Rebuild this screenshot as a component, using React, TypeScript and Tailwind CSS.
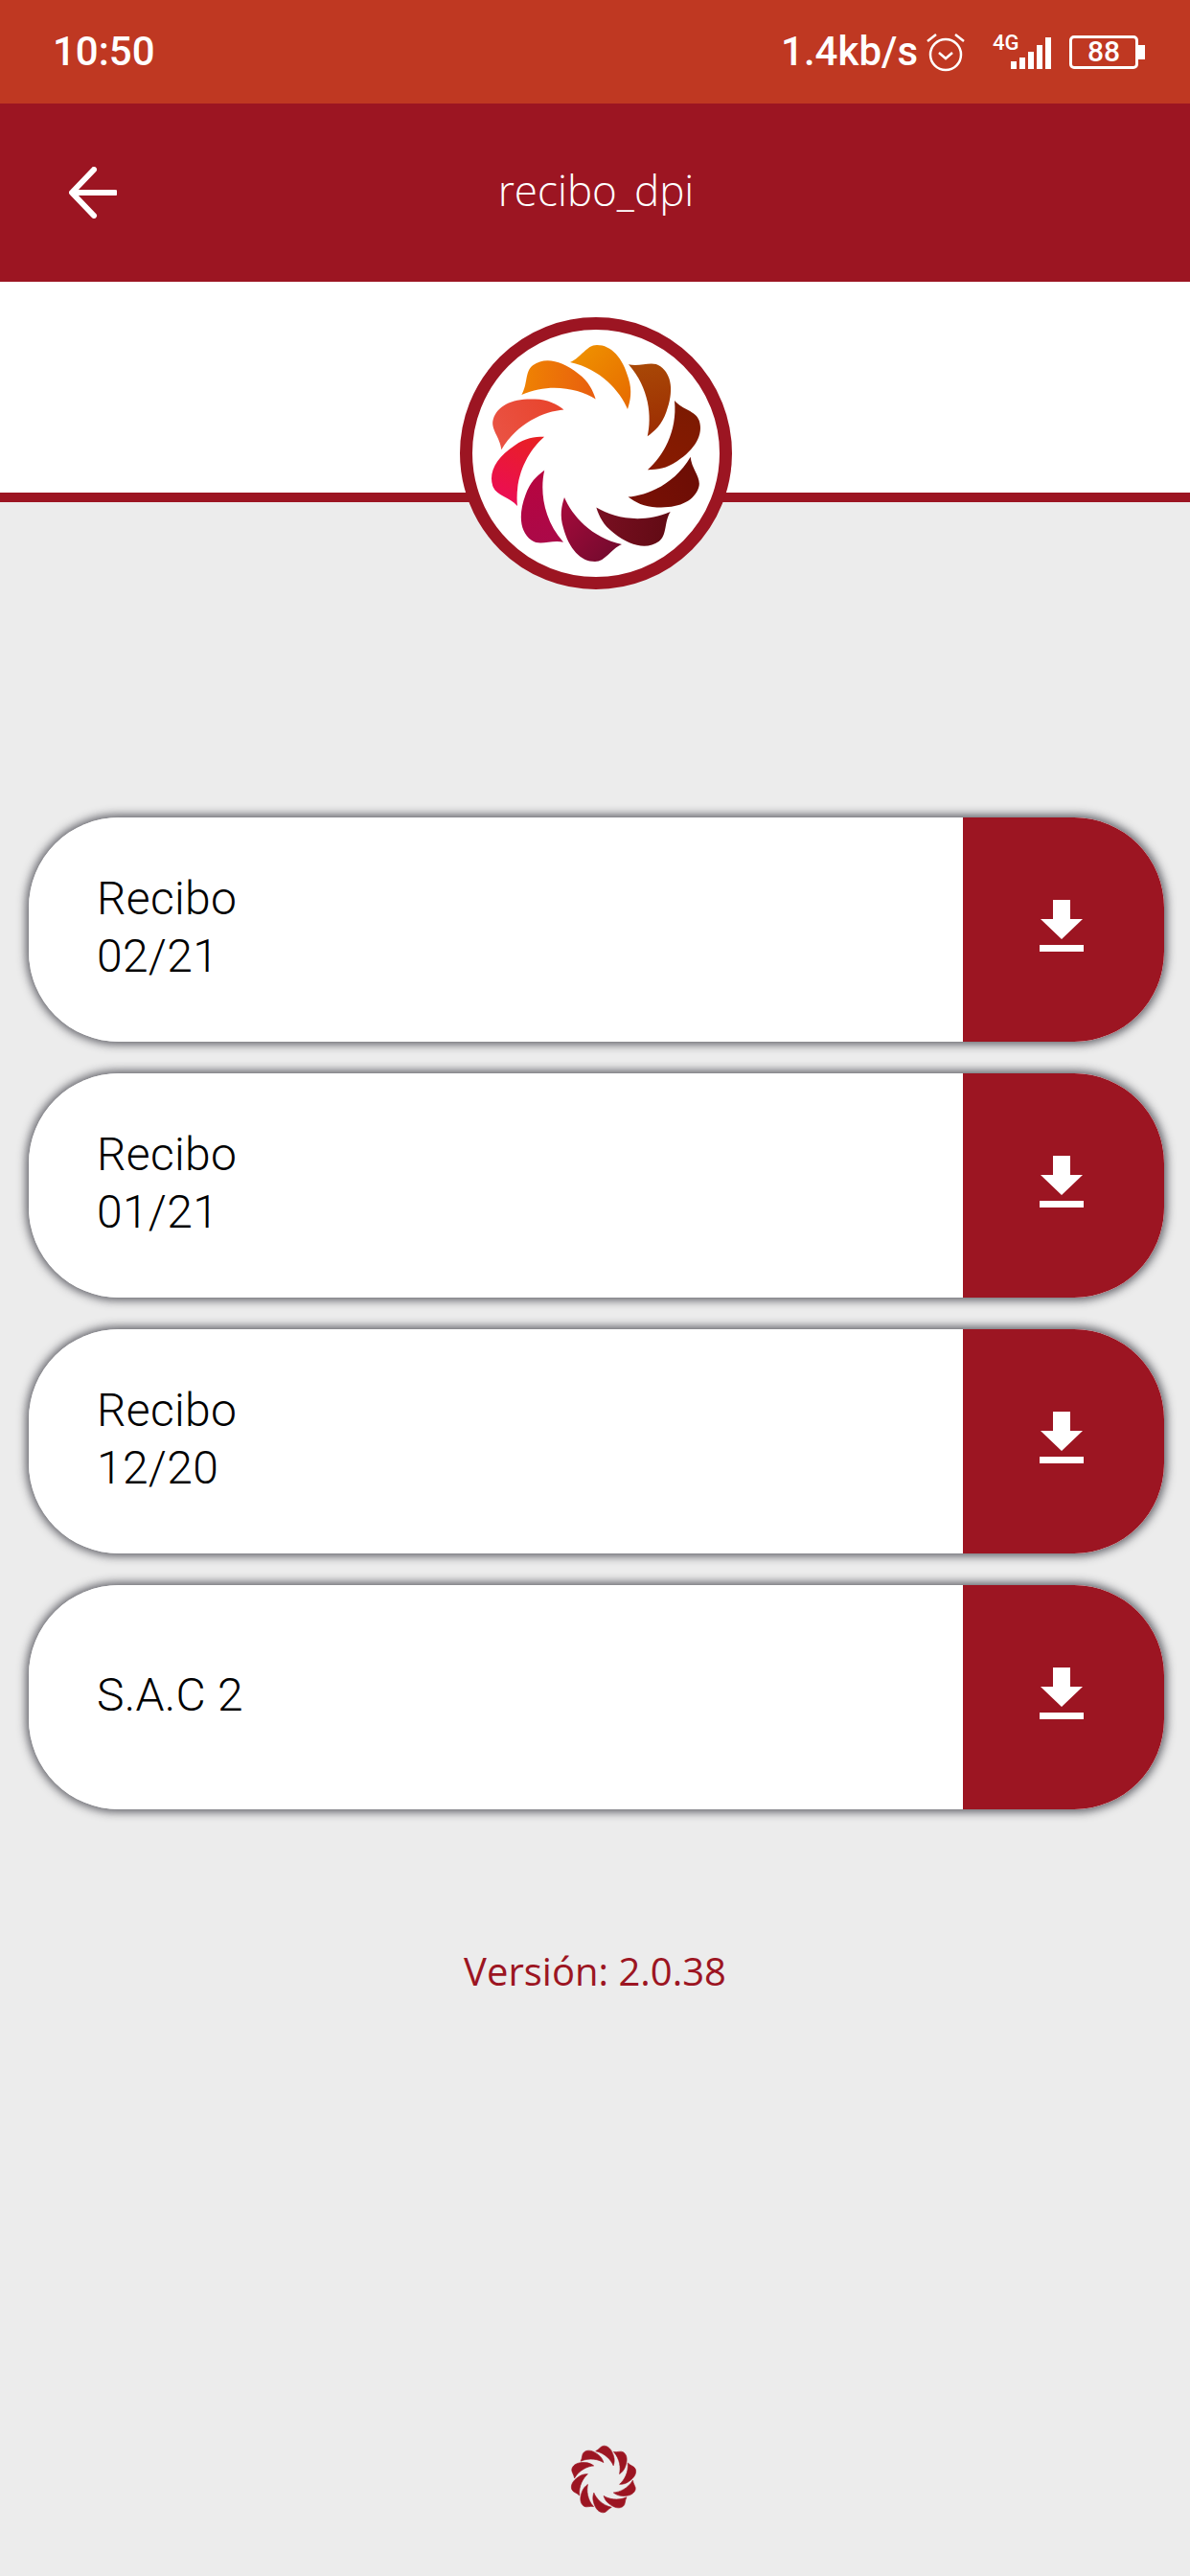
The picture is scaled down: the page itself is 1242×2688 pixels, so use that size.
import { useId } from 'react';

const receipts = [
  { id: 1, lines: ['Recibo', '02/21'] },
  { id: 2, lines: ['Recibo', '01/21'] },
  { id: 3, lines: ['Recibo', '12/20'] },
  { id: 4, lines: ['S.A.C 2'] },
];

// clockwise from the top petal
const petalColors = [
  ['#f09500', '#e66a00'],
  ['#ab4d07', '#9c2c02'],
  ['#7a1a02', '#8a1a00'],
  ['#6a0d05', '#7a1005'],
  ['#5e0a12', '#7a0f22'],
  ['#6e0a2c', '#a80a3c'],
  ['#a80a4a', '#b8043f'],
  ['#ec0a5c', '#e8221f'],
  ['#ea5548', '#e8432a'],
  ['#f08800', '#e85c10'],
];

const petalPath =
  'M-27,-95 C-15,-100 -10,-113 1,-113 C16,-113 28,-100 34,-78 C38,-65 36,-55 33,-46 C25,-65 5,-88 -27,-95 Z';

function Flower({ size, solid }: { size: number; solid?: string }) {
  const uid = useId();
  return (
    <svg width={size} height={size} viewBox="-120 -120 240 240">
      <defs>
        {petalColors.map((c, i) => (
          <linearGradient key={i} id={`${uid}-${i}`} x1="0" y1="0" x2="1" y2="1">
            <stop offset="0" stopColor={c[0]} />
            <stop offset="1" stopColor={c[1]} />
          </linearGradient>
        ))}
      </defs>
      {petalColors.map((_, i) => (
        <path
          key={i}
          d={petalPath}
          transform={`rotate(${i * 36})`}
          fill={solid ?? `url(#${uid}-${i})`}
          stroke={solid}
          strokeWidth={solid ? 2 : 0}
        />
      ))}
    </svg>
  );
}

function StatusBar() {
  return (
    <div className="h-[108px] bg-[#bf3822] flex items-center justify-between pl-[55px] pr-[47px] text-white font-['Roboto',sans-serif] font-medium">
      <span className="text-[42px] leading-none">10:50</span>
      <div className="flex items-center">
        <span className="text-[42px] leading-none">1.4kb/s</span>
        <svg className="ml-[9px]" width="40" height="42" viewBox="0 0 40 42" fill="none" stroke="white" strokeWidth="2.5">
          <circle cx="20" cy="24" r="16" />
          <path d="M13 22l7 6 7-6" />
          <path d="M1 10l9-7M39 10l-9-7" />
        </svg>
        <div className="relative ml-[29px] w-[61px] h-[36px]">
          <span className="absolute left-0 -top-[2px] text-[22px] leading-none">4G</span>
          <div className="absolute right-0 bottom-0 flex items-end gap-[3px]">
            <div className="w-[6px] h-[8px] bg-white" />
            <div className="w-[6px] h-[12px] bg-white" />
            <div className="w-[6px] h-[18px] bg-white" />
            <div className="w-[6px] h-[25px] bg-white" />
            <div className="w-[6px] h-[33px] bg-white" />
          </div>
        </div>
        <div className="ml-[19px] flex items-center">
          <div className="w-[72px] h-[35px] border-[3px] border-white rounded-[5px] flex items-center justify-center text-[30px] leading-none">
            88
          </div>
          <div className="w-[7px] h-[15px] bg-white" />
        </div>
      </div>
    </div>
  );
}

function AppBar() {
  return (
    <div className="h-[186px] bg-[#9c1522] grid grid-cols-[1fr_auto_1fr] items-center pl-[72px] font-['Open_Sans',sans-serif] text-white">
      <svg width="50" height="54" viewBox="0 0 50 54" fill="none" stroke="white" strokeWidth="6" strokeLinecap="round" strokeLinejoin="round">
        <path d="M26 3L3 27l23 24M4 27h44" />
      </svg>
      <span className="text-[44px] leading-none -ml-[70px] -mt-[6px] font-light">recibo_dpi</span>
      <span />
    </div>
  );
}

function DownloadIcon() {
  return (
    <svg width="46" height="54" viewBox="0 0 46 54" fill="white">
      <path d="M14 0h18v20h13L23 41 1 20h13z" />
      <rect x="0" y="47" width="46" height="7" />
    </svg>
  );
}

function ReceiptCard({ lines }: { lines: string[] }) {
  return (
    <div className="h-[234px] rounded-[94px] overflow-hidden flex bg-white">
      <div className="flex-1 pl-[71px] pb-[4px] flex flex-col justify-center font-['Roboto',sans-serif] font-[350] tracking-[0.3px] text-[48px] leading-[60px] text-black">
        {lines.map((line) => (
          <div key={line}>{line}</div>
        ))}
      </div>
      <div className="w-[210px] bg-[#9c1522] flex items-center justify-center pb-[8px] pr-[4px]">
        <DownloadIcon />
      </div>
    </div>
  );
}

export default function App() {
  return (
    <div className="w-[1242px] h-[2688px] bg-[#ececec] flex flex-col">
      <StatusBar />
      <AppBar />

      {/* white band with the logo sitting over its bottom line */}
      <div className="relative h-[230px] bg-white border-b-[10px] border-[#9c1522]">
        <div className="absolute left-[480px] top-[37px] w-[284px] h-[284px] rounded-full bg-white border-[13px] border-[#9c1522] flex items-center justify-center">
          <Flower size={240} />
        </div>
      </div>

      <div className="mt-[329px] pl-[30px] pr-[27px] flex flex-col gap-[33px]">
        {receipts.map((r) => (
          <div key={r.id} className="rounded-[94px] shadow-[0_0_10px_3px_rgba(40,40,50,0.7)]">
            <ReceiptCard lines={r.lines} />
          </div>
        ))}
      </div>

      <p className="mt-[141px] text-center text-[40px] leading-[56px] text-[#9c1522] font-['Open_Sans',sans-serif]">
        Versión: 2.0.38
      </p>

      <div className="mt-auto mb-[64px] flex justify-center pl-[18px]">
        <Flower size={74} solid="#9c1522" />
      </div>
    </div>
  );
}
